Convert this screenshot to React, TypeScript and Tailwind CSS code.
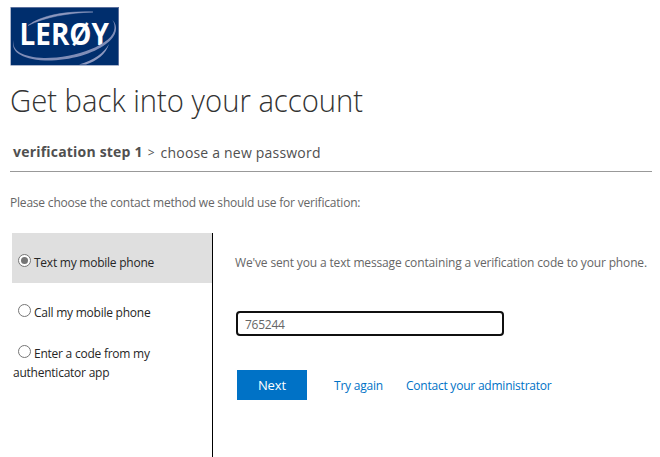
function Logo() {
  return (
    <svg width="109" height="59" viewBox="0 0 109 59" role="img" aria-label="LERØY" className="block">
      <rect x=".5" y="0" width="108.500" height="58.500" fill="#5a6f9c" />
      <rect x="1" y="1" width="107" height="57" fill="#002e6d" />
      <path d="M18 18.500C32 8 56 4 83 5C59 5.800 35 10 18 18.500Z" fill="#8d98bf" stroke="#8d98bf" strokeWidth=".5" />
      <path d="M69 57.500C84 53 94 46 99 37C96 47 87 54 76 57.500Z" fill="#8d98bf" />
      <text x="9.500" y="38" fill="#fff" fontFamily="'Open Sans'" fontWeight="700" fontSize="31" textLength="89.500" lengthAdjust="spacingAndGlyphs">LERØY</text>
      <path d="M4 33C1 44 13 50 34 51C63 51.500 104 38 104.500 21C104.500 17 104 15 102 12.500C109 19 107 29 96 37C83 47 59 54 35 53.500C10 52 0 44 4 33Z" fill="#7f8db7" />
    </svg>
  );
}

function Method({ text, selected = false, className }: { text: string; selected?: boolean; className: string }) {
  return (
    <label className={`block w-[200px] pl-px text-xs leading-[19px] tracking-[-0.24px] text-[#262626] ${className}`}>
      <span className="relative -top-0.5 mr-[3px] ml-[5px] inline-block size-[13px] rounded-full border border-[#767676] bg-white p-[2px] align-[-2px]">
        {selected && <span className="block size-[7px] rounded-full bg-[#767676]" />}
      </span>
      {text}
    </label>
  );
}

export default function App() {
  return (
    <main className="h-[457px] w-[660px] overflow-hidden bg-white pt-[7px] pl-[10px] font-['Open_Sans',sans-serif] text-[#666]">
      <Logo />
      <h1 className="mt-[12px] h-[44px] text-[32px] leading-[44px] font-light whitespace-nowrap text-[#333]">
        <span className="inline-block origin-left scale-x-[0.914]">Get back into your account</span>
      </h1>
      <div className="mt-[18px] flex h-[24px] items-center gap-[5px] pl-[3px] text-sm whitespace-nowrap text-[#505050]">
        <span className="font-bold tracking-[0.2px]">verification step 1</span>
        <span className="pt-px text-xs">&gt;</span>
        <span className="pt-[2px] pl-px tracking-[0.2px]">choose a new password</span>
      </div>
      <div className="mt-[7px] h-px w-[642px] bg-[#999]" />
      <p className="mt-[21px] h-[20px] text-xs leading-[20px] tracking-[-0.2px] whitespace-nowrap">
        <span>Please choose the contact method we should use for verification:</span>
      </p>
      <div className="mt-[20px] ml-[2px] flex h-[224px]">
        <div className="w-[201px] shrink-0 border-r border-black">
          <Method text="Text my mobile phone" selected className="h-[50px] bg-[#dfdfdf] pt-[20px]" />
          <Method text="Call my mobile phone" className="mt-[20px] h-[21px]" />
          <Method text="Enter a code from my authenticator app" className="mt-[20px] h-[40px] pr-[30px]" />
        </div>
        <section className="pt-[20px] pl-[22px] text-xs">
          <p className="h-[20px] leading-[20px] tracking-[-0.15px] whitespace-nowrap">
            <span>We've sent you a text message containing a verification code to your phone.</span>
          </p>
          <input
            type="text"
            defaultValue="765244"
            aria-label="Verification code"
            className="mt-[38px] ml-px block h-[25px] w-[268px] rounded-[4px] border-2 border-[#101010] px-[7px] pt-[2px] text-xs tracking-[-0.25px] outline-none"
          />
          <div className="mt-[34px] ml-[2px] flex h-[30px] items-center tracking-[-0.22px] whitespace-nowrap text-[#0072c6]">
            <button className="h-[30px] w-[70px] bg-[#0072c6] pt-px text-[13px] tracking-[-0.1px] text-white">Next</button>
            <a className="ml-[27px] pt-[2px]">Try again</a>
            <a className="ml-[23px] pt-[2px]">Contact your administrator</a>
          </div>
        </section>
      </div>
    </main>
  );
}
